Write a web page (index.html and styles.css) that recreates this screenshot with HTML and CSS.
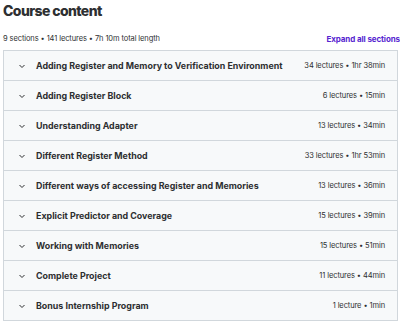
FILE: index.html
```html
<!DOCTYPE html>
<html lang="en">
<head>
    <meta charset="UTF-8">
    <title>Course content</title>
    <link rel="stylesheet" href="styles.css">
</head>
<body>

<div class="curriculum">
    <h2>Course content</h2>
    <div class="summary">
        <span>9 sections • 141 lectures • 7h 10m total length</span>
        <span class="expand">Expand all sections</span>
    </div>

    <div class="sections">
        <div class="section">
            <span class="chevron"><svg width="8" height="8" viewBox="0 0 8 8"><path d="M1.5 3l2.5 2.5L6.5 3" fill="none" stroke="#2d2f31" stroke-width="1"/></svg></span>
            <span class="title">Adding Register and Memory to Verification Environment</span>
            <span class="meta">34 lectures • 1hr 38min</span>
        </div>
        <div class="section">
            <span class="chevron"><svg width="8" height="8" viewBox="0 0 8 8"><path d="M1.5 3l2.5 2.5L6.5 3" fill="none" stroke="#2d2f31" stroke-width="1"/></svg></span>
            <span class="title">Adding Register Block</span>
            <span class="meta">6 lectures • 15min</span>
        </div>
        <div class="section">
            <span class="chevron"><svg width="8" height="8" viewBox="0 0 8 8"><path d="M1.5 3l2.5 2.5L6.5 3" fill="none" stroke="#2d2f31" stroke-width="1"/></svg></span>
            <span class="title">Understanding Adapter</span>
            <span class="meta">13 lectures • 34min</span>
        </div>
        <div class="section">
            <span class="chevron"><svg width="8" height="8" viewBox="0 0 8 8"><path d="M1.5 3l2.5 2.5L6.5 3" fill="none" stroke="#2d2f31" stroke-width="1"/></svg></span>
            <span class="title">Different Register Method</span>
            <span class="meta">33 lectures • 1hr 53min</span>
        </div>
        <div class="section">
            <span class="chevron"><svg width="8" height="8" viewBox="0 0 8 8"><path d="M1.5 3l2.5 2.5L6.5 3" fill="none" stroke="#2d2f31" stroke-width="1"/></svg></span>
            <span class="title">Different ways of accessing Register and Memories</span>
            <span class="meta">13 lectures • 36min</span>
        </div>
        <div class="section">
            <span class="chevron"><svg width="8" height="8" viewBox="0 0 8 8"><path d="M1.5 3l2.5 2.5L6.5 3" fill="none" stroke="#2d2f31" stroke-width="1"/></svg></span>
            <span class="title">Explicit Predictor and Coverage</span>
            <span class="meta">15 lectures • 39min</span>
        </div>
        <div class="section">
            <span class="chevron"><svg width="8" height="8" viewBox="0 0 8 8"><path d="M1.5 3l2.5 2.5L6.5 3" fill="none" stroke="#2d2f31" stroke-width="1"/></svg></span>
            <span class="title">Working with Memories</span>
            <span class="meta">15 lectures • 51min</span>
        </div>
        <div class="section">
            <span class="chevron"><svg width="8" height="8" viewBox="0 0 8 8"><path d="M1.5 3l2.5 2.5L6.5 3" fill="none" stroke="#2d2f31" stroke-width="1"/></svg></span>
            <span class="title">Complete Project</span>
            <span class="meta">11 lectures • 44min</span>
        </div>
        <div class="section">
            <span class="chevron"><svg width="8" height="8" viewBox="0 0 8 8"><path d="M1.5 3l2.5 2.5L6.5 3" fill="none" stroke="#2d2f31" stroke-width="1"/></svg></span>
            <span class="title">Bonus Internship Program</span>
            <span class="meta">1 lecture • 1min</span>
        </div>
    </div>
</div>

</body>
</html>
```

FILE: styles.css
```css
body {
    margin: 0;
    background: #fff;
    font-family: Inter, "Noto Sans", sans-serif;
    color: #2d2f31;
}
.curriculum {
    padding: 0 0 0 3px;
}
h2 {
    margin: 0;
    font-size: 14px;
    font-weight: 800;
    line-height: 22px;
    letter-spacing: -0.6px;
}
.summary {
    display: flex;
    justify-content: space-between;
    align-items: center;
    margin-top: 11px;
    font-size: 7.5px;
    line-height: 12px;
    color: #2d2f31;
    letter-spacing: -0.1px;
}
.expand {
    color: #5624d0;
    font-weight: 700;
    font-size: 8px;
}
.sections {
    margin-top: 5px;
    margin-right: 2px;
    border: 1px solid #d1d7dc;
}
.section {
    display: flex;
    align-items: center;
    height: 29px;
    padding: 0 12px 0 14px;
    background: #f7f9fa;
    border-bottom: 1px solid #d1d7dc;
}
.section:last-child {
    border-bottom: none;
}
.chevron {
    display: flex;
    width: 8px;
    margin-right: 10px;
}
.title {
    flex: 1;
    font-size: 8.9px;
    font-weight: 700;
}
.meta {
    font-size: 7.5px;
    letter-spacing: -0.1px;
}
```
